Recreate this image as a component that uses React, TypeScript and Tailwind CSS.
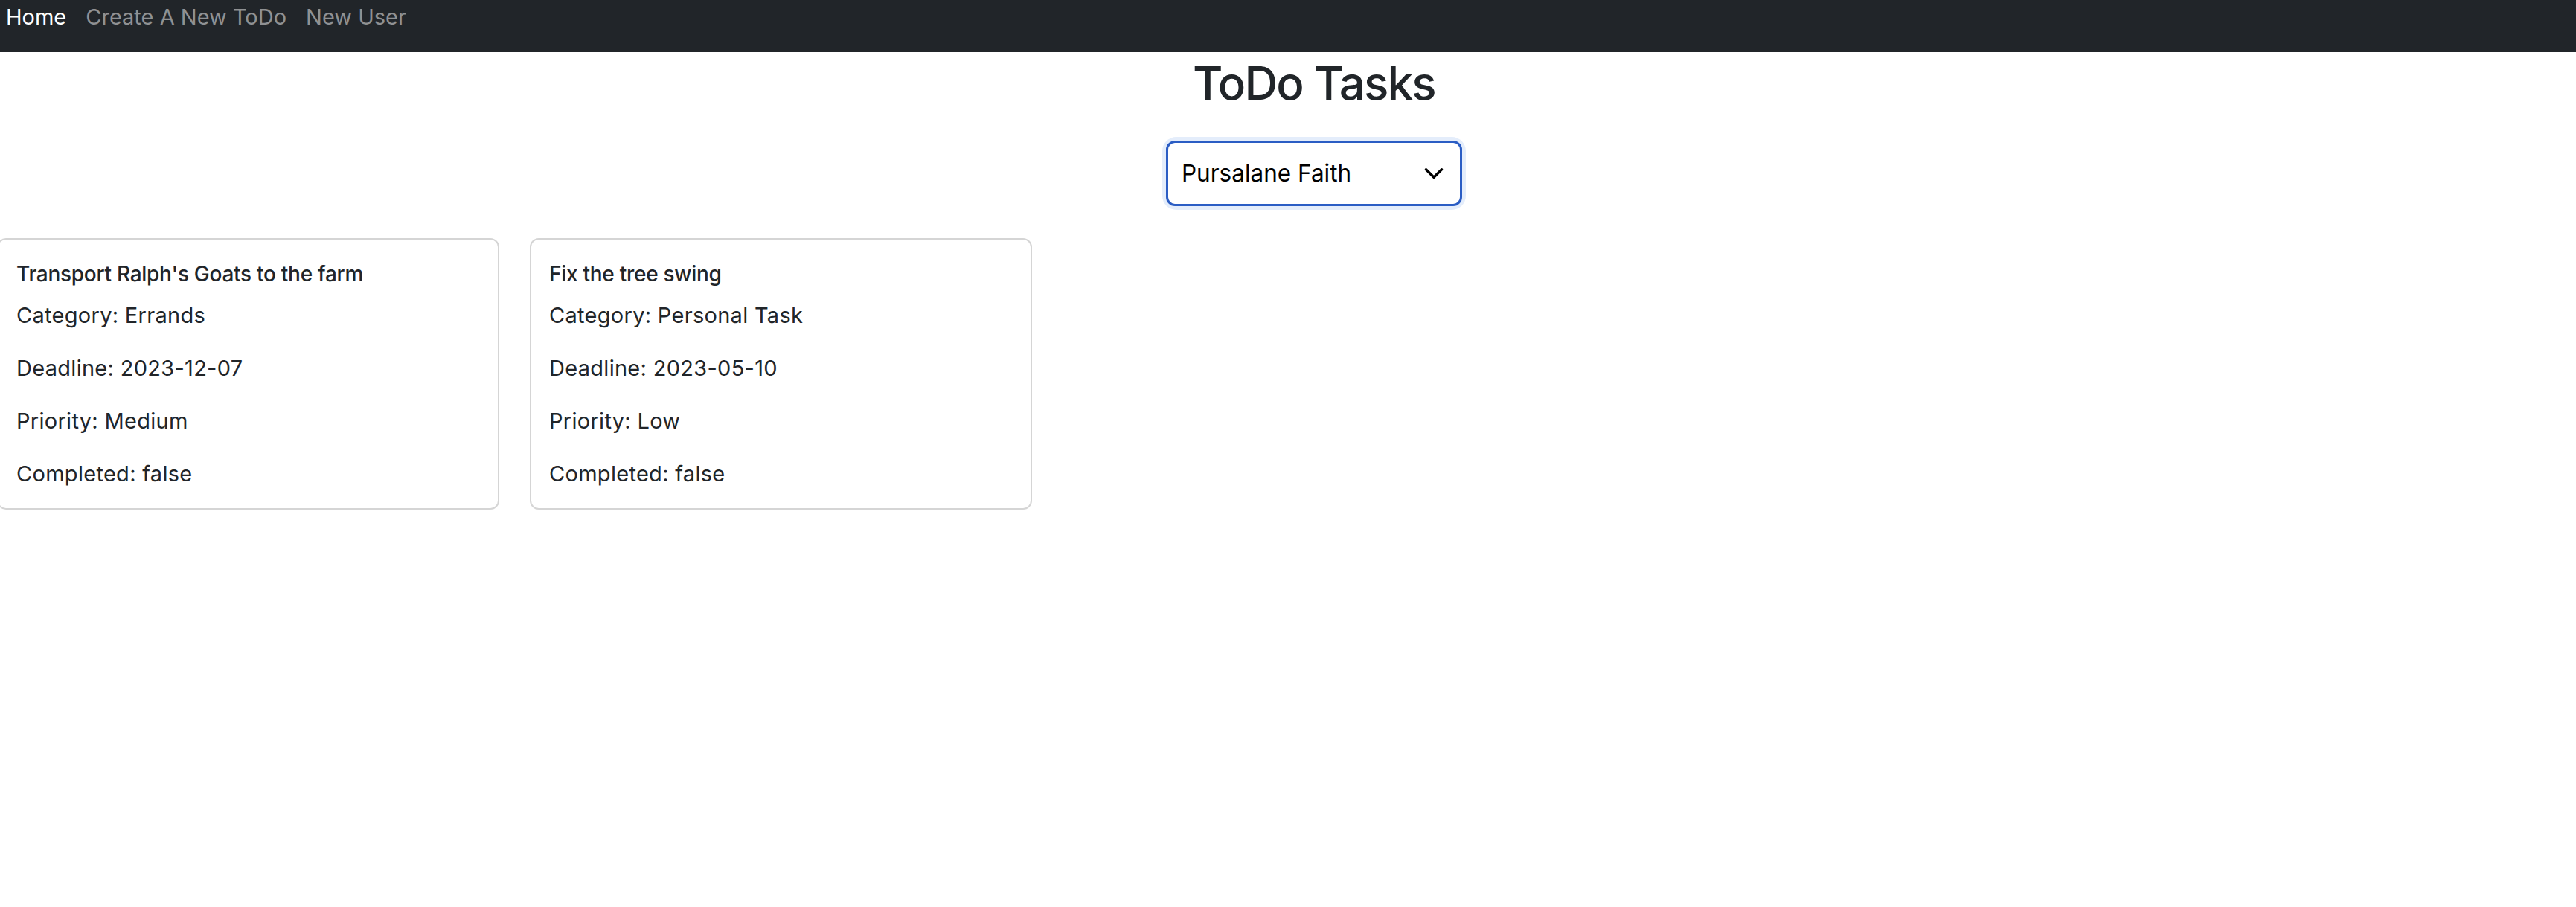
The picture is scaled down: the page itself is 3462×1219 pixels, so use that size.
import { useState } from "react"

type Todo = {
  title: string
  category: string
  deadline: string
  priority: string
  completed: boolean
}

const todos: Todo[] = [
  {
    title: "Transport Ralph's Goats to the farm",
    category: "Errands",
    deadline: "2023-12-07",
    priority: "Medium",
    completed: false,
  },
  {
    title: "Fix the tree swing",
    category: "Personal Task",
    deadline: "2023-05-10",
    priority: "Low",
    completed: false,
  },
]

const users = ["Pursalane Faith"]

function NavBar() {
  return (
    <nav className="h-[70px] bg-[#212529] flex items-start pl-[8px] gap-[26px] text-[29px] leading-[42px] pt-[2px]">
      <a className="text-white">Home</a>
      <a className="text-[#8f9193]">Create A New ToDo</a>
      <a className="text-[#8f9193]">New User</a>
    </nav>
  )
}

function TodoCard({ todo }: { todo: Todo }) {
  return (
    <div className="w-[675px] border-2 border-[#d5d5d5] rounded-[12px] px-[24px] pt-[29px] pb-[25px] bg-white">
      <h5 className="text-[28px] leading-[34px] font-medium tracking-[-0.01em] text-[#212529] mb-[18px]">
        {todo.title}
      </h5>
      <div className="flex flex-col gap-[29px] text-[29px] leading-[42px] tracking-[0.01em] text-[#212529]">
        <p>Category: {todo.category}</p>
        <p>Deadline: {todo.deadline}</p>
        <p>Priority: {todo.priority}</p>
        <p>Completed: {String(todo.completed)}</p>
      </div>
    </div>
  )
}

export default function App() {
  const [user, setUser] = useState(users[0])

  return (
    <div className="min-h-screen bg-white font-['Inter','Liberation_Sans',sans-serif] text-[#212529]">
      <NavBar />
      <div className="flex flex-col items-center pl-[70px]">
        <h1 className="text-[62px] leading-[80px] font-medium tracking-[-0.03em] mt-[2px]">ToDo Tasks</h1>
        <div className="relative mt-[37px] rounded-[14px] shadow-[0_0_0_5px_#e4edfb]">
          <select
            value={user}
            onChange={(e) => setUser(e.target.value)}
            className="appearance-none w-[398px] h-[88px] border-[3px] border-[#2b5dc4] rounded-[12px] pl-[18px] text-[31.5px] text-black bg-white outline-none"
          >
            {users.map((u) => (
              <option key={u}>{u}</option>
            ))}
          </select>
          <svg
            className="absolute right-[24px] top-[30px] pointer-events-none"
            width="28"
            height="28"
            viewBox="0 0 16 16"
            fill="none"
          >
            <path d="m2 5 6 6 6-6" stroke="#000" strokeWidth="2" strokeLinecap="round" strokeLinejoin="round" />
          </svg>
        </div>
      </div>
      <div className="flex gap-[41px] ml-[-4px] mt-[43px]">
        {todos.map((t) => (
          <TodoCard key={t.title} todo={t} />
        ))}
      </div>
    </div>
  )
}
